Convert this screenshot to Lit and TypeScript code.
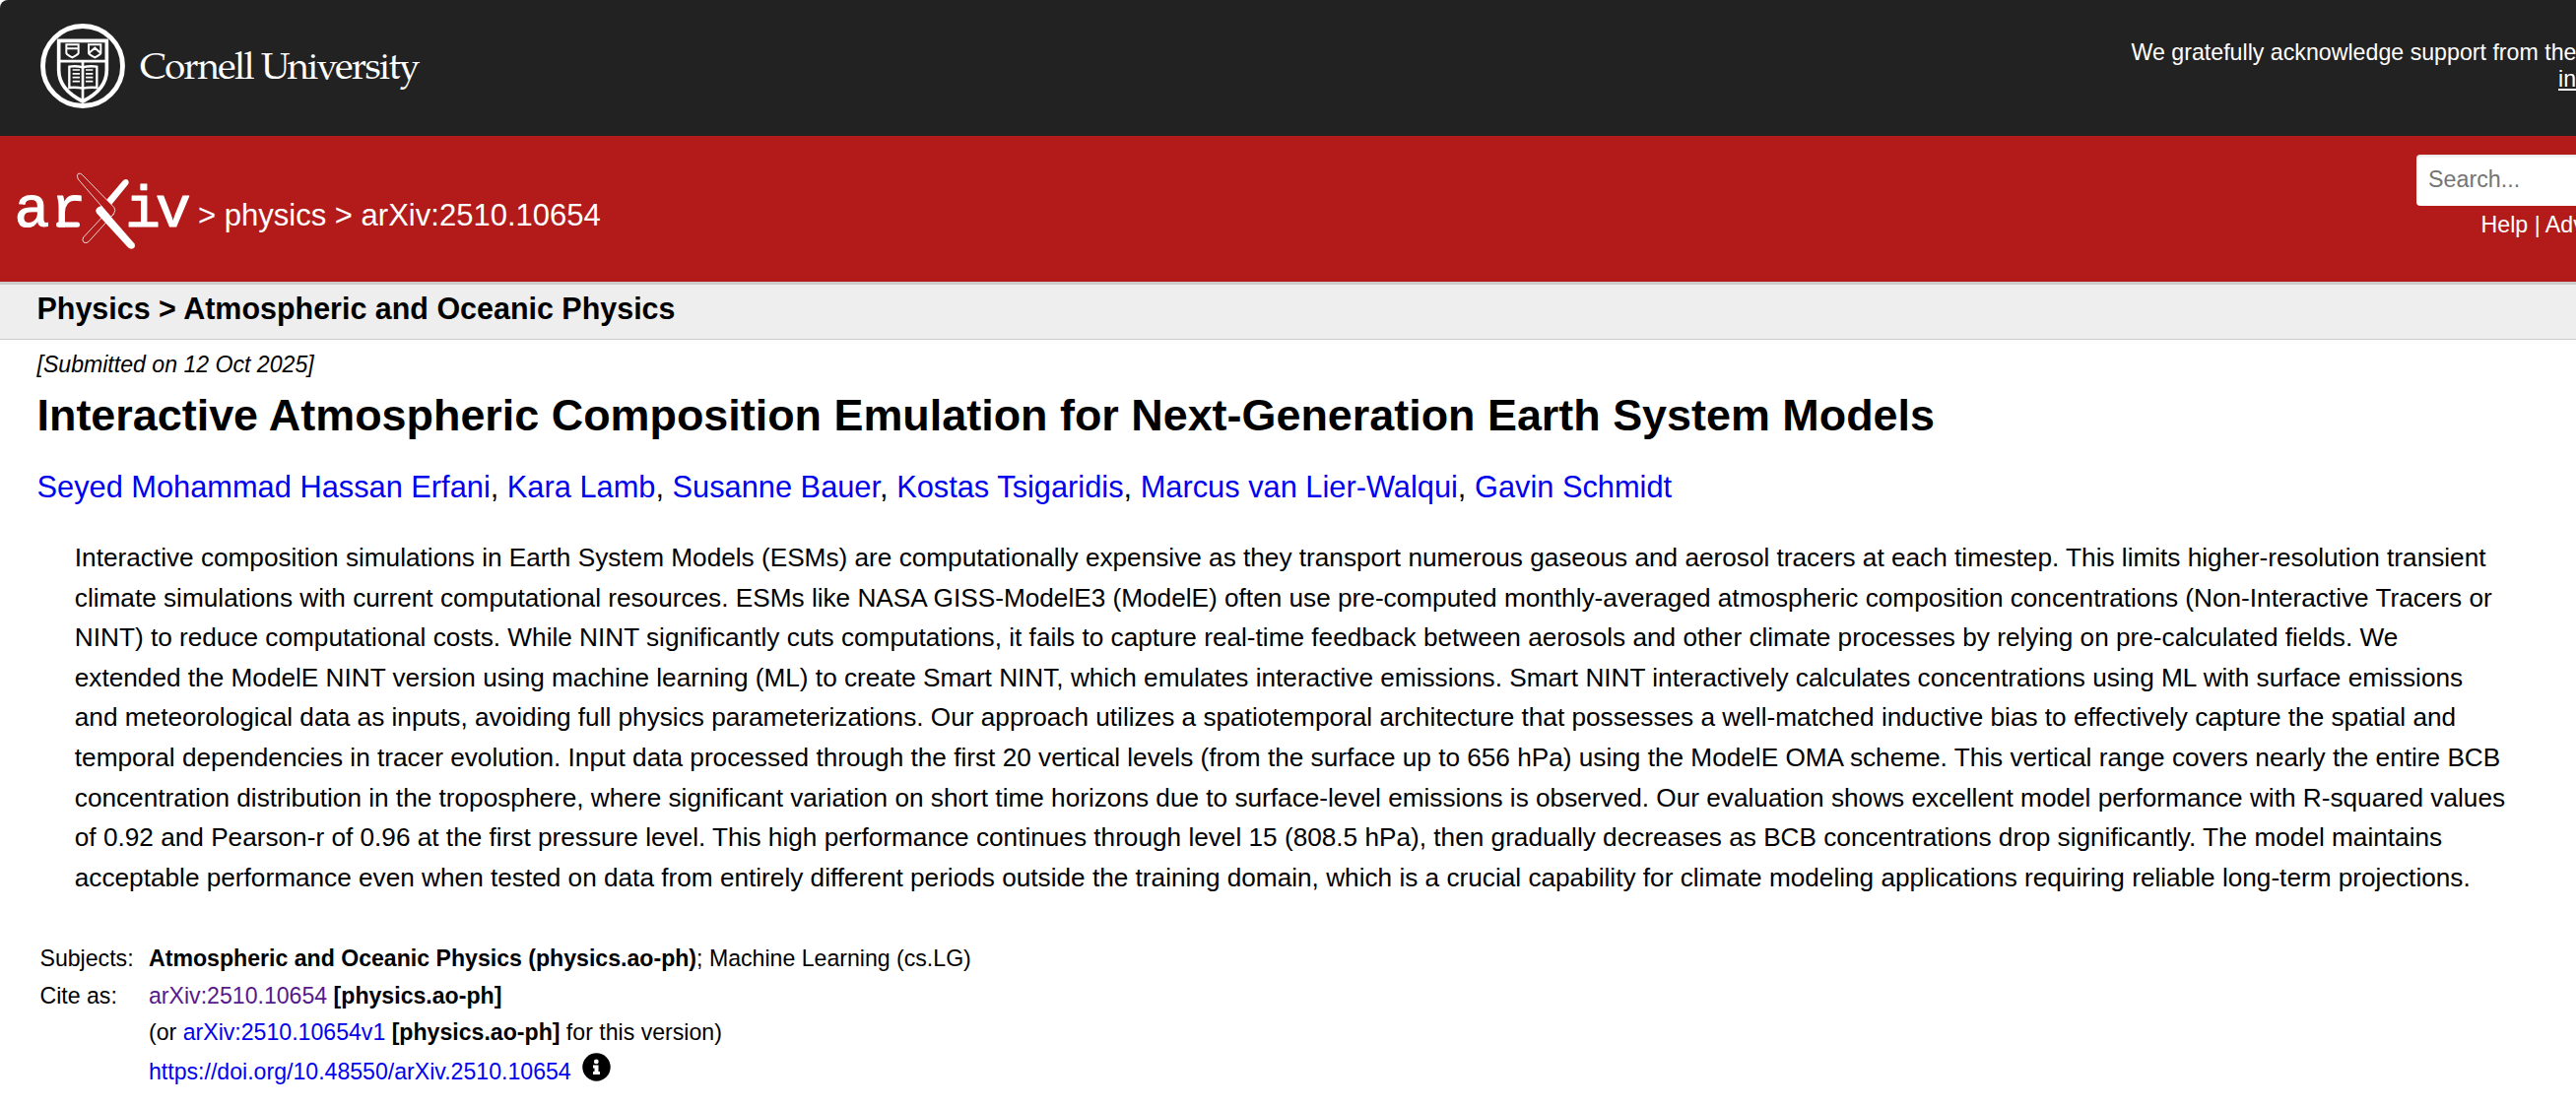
import {LitElement, html, svg, css} from 'lit';
import {customElement} from 'lit/decorators.js';

const AUTHORS = [
  'Seyed Mohammad Hassan Erfani', 'Kara Lamb', 'Susanne Bauer',
  'Kostas Tsigaridis', 'Marcus van Lier-Walqui', 'Gavin Schmidt',
];

const ABSTRACT = [
  'Interactive composition simulations in Earth System Models (ESMs) are computationally expensive as they transport numerous gaseous and aerosol tracers at each timestep. This limits higher-resolution transient',
  'climate simulations with current computational resources. ESMs like NASA GISS-ModelE3 (ModelE) often use pre-computed monthly-averaged atmospheric composition concentrations (Non-Interactive Tracers or',
  'NINT) to reduce computational costs. While NINT significantly cuts computations, it fails to capture real-time feedback between aerosols and other climate processes by relying on pre-calculated fields. We',
  'extended the ModelE NINT version using machine learning (ML) to create Smart NINT, which emulates interactive emissions. Smart NINT interactively calculates concentrations using ML with surface emissions',
  'and meteorological data as inputs, avoiding full physics parameterizations. Our approach utilizes a spatiotemporal architecture that possesses a well-matched inductive bias to effectively capture the spatial and',
  'temporal dependencies in tracer evolution. Input data processed through the first 20 vertical levels (from the surface up to 656 hPa) using the ModelE OMA scheme. This vertical range covers nearly the entire BCB',
  'concentration distribution in the troposphere, where significant variation on short time horizons due to surface-level emissions is observed. Our evaluation shows excellent model performance with R-squared values',
  'of 0.92 and Pearson-r of 0.96 at the first pressure level. This high performance continues through level 15 (808.5 hPa), then gradually decreases as BCB concentrations drop significantly. The model maintains',
  'acceptable performance even when tested on data from entirely different periods outside the training domain, which is a crucial capability for climate modeling applications requiring reliable long-term projections.',
];

@customElement('cornell-logo')
class CornellLogo extends LitElement {
  static styles = css`
    :host { display: block; }
    svg { display: block; }
    .line { fill: none; stroke: #fff; }
    .name { font-family: "TeX Gyre Pagella", "Liberation Serif", serif; font-size: 38px; fill: #fff; }
  `;
  render() {
    const rules = [213, 224.5, 236, 248];
    return html`<svg width="400" height="90" viewBox="40 22 400 90">
      <g transform="scale(.33333)">
        <circle class="line" cx="252" cy="201" r="121.5" stroke-width="14.5"/>
        <path class="line" stroke-width="11" d="M179 124H325V214C325 262 290 290 252 309C214 290 179 262 179 214Z"/>
        <path class="line" stroke-width="8" d="M179 186.500H325M252 187V306"/>
        <path class="line" stroke-width="7" d="M252 205Q232 200 211 203V267Q234 265 252 269Q270 265 295 267V203Q272 200 252 205"/>
        ${rules.map(y => svg`<path class="line" stroke-width="5" d="M221 ${y}H243M261 ${y}H283"/>`)}
        <path class="line" stroke-width="6" d="M202 136H239V162Q236 168 220 175Q205 168 202 162ZM202 148H239"/>
        <path class="line" stroke-width="6" d="M270 136H307V162Q304 168 289 175Q273 168 270 162ZM271 161L289 146L306 161"/>
      </g>
      <text class="name" x="141.900" y="80" textLength="284.500" lengthAdjust="spacing">Cornell University</text>
    </svg>`;
  }
}

@customElement('arxiv-logo')
class ArxivLogo extends LitElement {
  static styles = css`
    :host { display: block; }
    svg { display: block; }
    .word { font: 60px "Liberation Mono", monospace; fill: #fff; stroke: #fff; stroke-width: 1.1; stroke-linejoin: round; }
    .solid { fill: #fff; }
    .hollow { fill: #b31b1b; stroke: #fff; stroke-width: 2.4; stroke-linejoin: round; }
  `;
  render() {
    return html`<svg width="180" height="84" viewBox="14 172 180 84">
      <text class="word" y="230" x="14.500 51.500 127 157.700">ariv</text>
      <rect class="solid" x="57" y="225.500" width="24" height="5.300" rx="2.400"/>
      <g transform="translate(0 160) scale(.33333)">
        <path class="solid" d="M373 72Q382 62 390 69Q395 76 388 84L336 148L320 134Z"/>
        <path class="hollow" d="M322 170L254 243Q248 252 256 259Q264 263 272 254L347 171Z"/>
        <path class="hollow" d="M238 66Q232 54 238 49Q246 46 252 54L347 151Q354 160 347 170L338 181Z"/>
        <path class="solid" d="M292 160Q296 150 309 147L409 262Q414 272 406 277Q397 281 390 274L295 170Q291 165 292 160Z"/>
      </g>
    </svg>`;
  }
}

@customElement('app-root')
class AppRoot extends LitElement {
  static styles = css`
    :host {
      display: block; height: 1124px; overflow: hidden; background: #fff; color: #000;
      font: 23.12px/26px "Liberation Sans", Arial, sans-serif; white-space: nowrap;
    }
    .top { display: flex; justify-content: space-between; height: 138px; background: #222; color: #fff; border-top-left-radius: 8px; overflow: hidden; }
    .seal { padding: 22px 0 0 40px; }
    .thanks { width: 451.5px; padding-top: 40px; font-size: 23.2px; line-height: 27px; }
    .thanks .member { display: block; padding-left: 433.5px; text-decoration: underline; }
    .brand { display: flex; justify-content: space-between; height: 148px; background: #b31b1b; color: #fff; overflow: hidden; }
    .path { display: flex; padding: 34px 0 0 14px; }
    .crumbs { margin: 29px 0 0 7px; font-size: 31.04px; line-height: 35px; }
    .find { width: 162px; padding-top: 19px; }
    .box { width: 220px; height: 52px; box-sizing: border-box; padding: 12px 0 0 12px; border-radius: 4px; background: #fff; color: #757575; box-shadow: inset 0 2px 3px rgba(10,10,10,.1); font-size: 23.3px; }
    .help { padding: 6px 0 0 65.5px; font-size: 23.2px; }
    .subject { height: 55px; border-top: 3px solid #ccc; border-bottom: 1px solid #ccc; background: #eee; }
    .subject h1 { margin: 0; padding: 7px 0 0 37.5px; font-size: 30.46px; line-height: 34px; }
    main { padding: 12px 0 0 37.5px; }
    .date { font-style: italic; font-size: 23.1px; }
    .title { margin: 13px 0 0; font-size: 44.9px; line-height: 51px; }
    .authors { margin-top: 30px; font-size: 30.79px; line-height: 35px; }
    a { color: #00e; text-decoration: none; }
    .seen { color: #551a8b; }
    .abstract { margin: 33.91px 0 0 38.3px; font-size: 26.2px; line-height: 40.625px; }
    .abstract span { display: block; }
    .meta { display: grid; grid-template-columns: 110.5px auto; margin: 48.47px 0 0 3px; }
    .cite { padding-top: 12px; }
    .version { grid-column: 2; padding-top: 11px; }
    .doi { grid-column: 2; display: flex; gap: 11px; padding-top: 14px; }
    .info { margin-top: -6px; }
  `;
  render() {
    return html`
      <header>
        <div class="top">
          <cornell-logo class="seal"></cornell-logo>
          <div class="thanks">We gratefully acknowledge support from the<span class="member">in</span></div>
        </div>
        <div class="brand">
          <div class="path"><arxiv-logo></arxiv-logo><div class="crumbs">&gt; physics &gt; arXiv:2510.10654</div></div>
          <div class="find"><div class="box">Search...</div><div class="help">Help | Adv</div></div>
        </div>
        <div class="subject"><h1>Physics &gt; Atmospheric and Oceanic Physics</h1></div>
      </header>
      <main>
        <div class="date">[Submitted on 12 Oct 2025]</div>
        <h1 class="title">Interactive Atmospheric Composition Emulation for Next-Generation Earth System Models</h1>
        <div class="authors">${AUTHORS.map((a, i) => html`${i ? ', ' : ''}<a>${a}</a>`)}</div>
        <div class="abstract">${ABSTRACT.map(l => html`<span>${l}</span>`)}</div>
        <div class="meta">
          <div>Subjects:</div>
          <div><b>Atmospheric and Oceanic Physics (physics.ao-ph)</b>; Machine Learning (cs.LG)</div>
          <div class="cite">Cite as:</div>
          <div class="cite"><a class="seen">arXiv:2510.10654</a> <b>[physics.ao-ph]</b></div>
          <div class="version">(or <a>arXiv:2510.10654v1</a> <b>[physics.ao-ph]</b> for this version)</div>
          <div class="doi"><a>https://doi.org/10.48550/arXiv.2510.10654</a>
            <svg class="info" width="29" height="29" viewBox="0 0 29 29">
              <circle cx="14.500" cy="14.500" r="14.200"/>
              <circle cx="14.300" cy="8.900" r="2.400" fill="#fff"/>
              <path fill="#fff" d="M11 12.500H16.500V19H18V22H11V19H12.500V15.500H11Z"/>
            </svg>
          </div>
        </div>
      </main>`;
  }
}
